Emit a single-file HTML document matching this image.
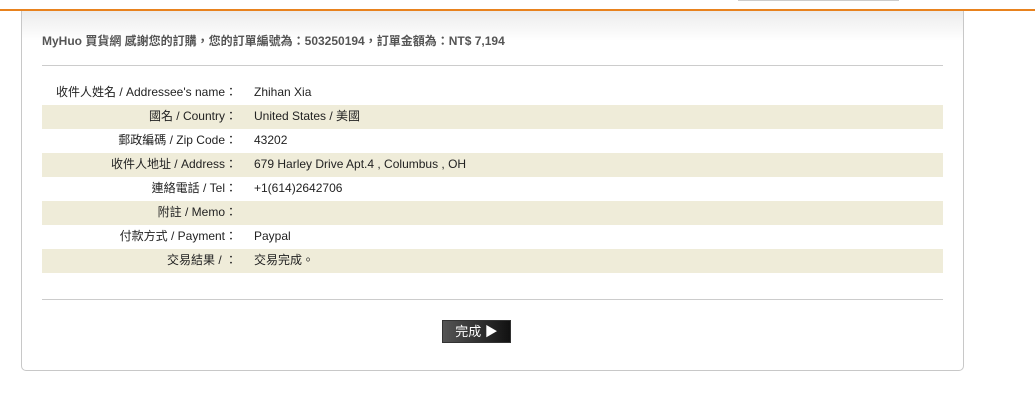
<!DOCTYPE html>
<html><head><meta charset="utf-8"><style>
body{margin:0;width:1035px;height:414px;background:#fff;position:relative;overflow:hidden;font-family:"Liberation Sans","Noto Sans CJK TC",sans-serif;font-size:12px;color:#222}
.top{position:absolute;left:0;top:9px;width:1035px;height:2px;background:#e8821e}
.gb{position:absolute;left:738px;top:0;width:161px;height:1px;background:#ccc}
.box{position:absolute;left:21px;top:11px;width:941px;height:359px;border:1px solid #c8c8c8;border-top:none;border-radius:0 0 5px 5px;background:linear-gradient(#ececec,#fff 30px)}
.h{position:absolute;left:42px;top:32px;font-weight:bold;color:#555;font-size:12px}
.hr{position:absolute;left:42px;width:901px;height:1px;background:#ccc}
.row{position:absolute;left:42px;width:901px;height:24px;line-height:23px}
.row.b{background:#efecd9}
.l{position:absolute;right:706px;text-align:right;white-space:nowrap}
.v{position:absolute;left:212px;white-space:nowrap}
.btn{position:absolute;left:442px;top:320px;width:69px;height:23px;background:linear-gradient(90deg,#555,#111);border:1px solid #333;box-sizing:border-box;color:#fff;font-size:13px;line-height:21px;text-align:center}
</style></head><body>
<div class="gb"></div>
<div class="top"></div>
<div class="box"></div>
<div class="h">MyHuo 買貨網 感謝您的訂購，您的訂單編號為：503250194，訂單金額為：NT$ 7,194</div>
<div class="hr" style="top:65px"></div>
<div class="row" style="top:81px"><span class="l">收件人姓名 / Addressee's name：</span><span class="v">Zhihan Xia</span></div>
<div class="row b" style="top:105px"><span class="l">國名 / Country：</span><span class="v">United States / 美國</span></div>
<div class="row" style="top:129px"><span class="l">郵政編碼 / Zip Code：</span><span class="v">43202</span></div>
<div class="row b" style="top:153px"><span class="l">收件人地址 / Address：</span><span class="v">679 Harley Drive Apt.4 , Columbus , OH</span></div>
<div class="row" style="top:177px"><span class="l">連絡電話 / Tel：</span><span class="v">+1(614)2642706</span></div>
<div class="row b" style="top:201px"><span class="l">附註 / Memo：</span><span class="v"></span></div>
<div class="row" style="top:225px"><span class="l">付款方式 / Payment：</span><span class="v">Paypal</span></div>
<div class="row b" style="top:249px"><span class="l">交易結果 / ：</span><span class="v">交易完成。</span></div>
<div class="hr" style="top:299px"></div>
<div class="btn">完成 ▶</div>
</body></html>
